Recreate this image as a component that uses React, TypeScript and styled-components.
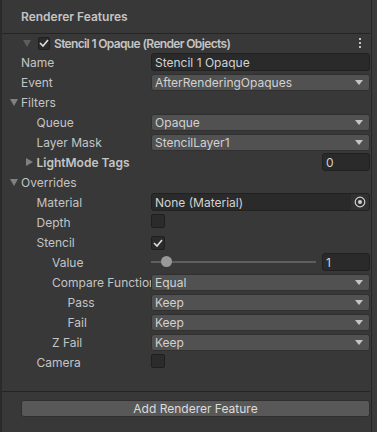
import React from "react";
import styled, { createGlobalStyle } from "styled-components";

const GlobalStyle = createGlobalStyle`
  html, body {
    margin: 0;
    padding: 0;
    background: #383838;
  }
  * {
    box-sizing: border-box;
  }
`;

const Panel = styled.div`
  width: 377px;
  height: 432px;
  display: flex;
  background: #383838;
  border-left: 2px solid #2a2a2a;
  font-family: Inter, "Noto Sans", sans-serif;
  font-size: 12px;
  color: #c4c4c4;
  overflow: hidden;
`;

const Content = styled.div`
  flex: 1;
  display: flex;
  flex-direction: column;
  padding-right: 1px;
`;

const Strip = styled.div`
  width: 6px;
  border-left: 1px solid #262626;
  background: #3a3a3a;
`;

const Title = styled.div`
  height: 33px;
  display: flex;
  align-items: center;
  padding-left: 19px;
  font-weight: 600;
`;

const Separator = styled.div`
  height: 1px;
  background: #242424;
  margin-left: -2px;
`;

const FeatureHeader = styled.div`
  height: 18px;
  display: flex;
  align-items: center;
  padding-left: 21px;
  font-weight: 600;
`;

const HeaderName = styled.span`
  flex: 1;
  margin-left: 4px;
  letter-spacing: -0.65px;
`;

const Row = styled.div`
  height: 20px;
  display: grid;
  grid-template-columns: 149px 1fr;
  align-items: center;
`;

const Label = styled.div<{ $depth: number; $bold?: boolean; $fold?: boolean }>`
  padding-left: ${(p) => 19 + p.$depth * 15.5 - (p.$fold ? 11 : 0)}px;
  white-space: nowrap;
  overflow: hidden;
  display: flex;
  align-items: center;
  font-weight: ${(p) => (p.$bold ? 600 : 400)};
`;

const Fold = styled.span`
  display: inline-flex;
  flex: none;
  width: 11px;
  align-items: center;
`;

const TextField = styled.div`
  height: 18px;
  background: #2a2a2a;
  border: 1px solid #212121;
  border-radius: 3px;
  display: flex;
  align-items: center;
  padding-left: 3px;
  color: #d2d2d2;
  overflow: hidden;
`;

const FieldText = styled.span`
  flex: 1;
  white-space: nowrap;
`;

const Picker = styled.span`
  width: 18px;
  height: 16px;
  display: flex;
  align-items: center;
  justify-content: center;
  background: #313131;
  border-radius: 0 2px 2px 0;
`;

const Dropdown = styled.div`
  height: 17px;
  background: #515151;
  border: 1px solid #303030;
  border-radius: 3px;
  display: flex;
  align-items: center;
  padding: 0 6px 0 3px;
  color: #d2d2d2;
`;

const IntRow = styled.div`
  display: flex;
  justify-content: flex-end;
`;

const IntField = styled(TextField)`
  width: 48px;
`;

const SliderRow = styled.div`
  display: flex;
  align-items: center;
  gap: 6px;
`;

const Track = styled.div`
  flex: 1;
  height: 2px;
  background: #5e5e5e;
  position: relative;
`;

const Thumb = styled.span`
  position: absolute;
  left: 10px;
  top: -5px;
  width: 11px;
  height: 11px;
  border-radius: 50%;
  background: #999999;
`;

const Box = styled.span<{ $small?: boolean }>`
  width: ${(p) => (p.$small ? 12 : 14)}px;
  height: ${(p) => (p.$small ? 13 : 14)}px;
  background: #2b2b2b;
  border: 1px solid #1f1f1f;
  border-radius: 2px;
  display: inline-flex;
  align-items: center;
  justify-content: center;
`;

const Footer = styled.div`
  flex: 1;
  display: flex;
  flex-direction: column;
  justify-content: flex-end;
`;

const ButtonArea = styled.div`
  height: 40px;
  padding: 8px 0 0 19px;
`;

const AddButton = styled.div`
  height: 17px;
  background: #585858;
  border: 1px solid #2f2f2f;
  border-radius: 3px;
  display: flex;
  align-items: center;
  justify-content: center;
  color: #dcdcdc;
`;

const Arrow = () => (
  <svg width="8" height="5" viewBox="0 0 8 5">
    <path d="M0 0 L8 0 L4 5 Z" fill="#c4c4c4" />
  </svg>
);

const FoldDown = ({ color = "#808080" }: { color?: string }) => (
  <svg width="8" height="7" viewBox="0 0 8 7">
    <path d="M0 0 L8 0 L4 7 Z" fill={color} />
  </svg>
);

const FoldRight = () => (
  <svg width="7" height="8" viewBox="0 0 7 8">
    <path d="M0 0 L7 4 L0 8 Z" fill="#808080" />
  </svg>
);

const Check = () => (
  <svg width="10" height="8" viewBox="0 0 10 8">
    <path d="M1 4 L4 7 L9 1" stroke="#e0e0e0" strokeWidth="1.6" fill="none" />
  </svg>
);

const Kebab = () => (
  <svg width="4" height="12" viewBox="0 0 4 12" style={{ marginRight: 8 }}>
    <rect x="1" y="1" width="2" height="2" fill="#c4c4c4" />
    <rect x="1" y="5" width="2" height="2" fill="#c4c4c4" />
    <rect x="1" y="9" width="2" height="2" fill="#c4c4c4" />
  </svg>
);

const Target = () => (
  <svg width="12" height="12" viewBox="0 0 12 12">
    <circle cx="6" cy="6" r="4.8" stroke="#d0d0d0" strokeWidth="1.2" fill="none" />
    <circle cx="6" cy="6" r="2" fill="#d0d0d0" />
  </svg>
);

type Field =
  | { kind: "text"; value: string; picker?: boolean }
  | { kind: "dropdown"; value: string }
  | { kind: "int"; value: string }
  | { kind: "slider"; value: string }
  | { kind: "toggle"; checked: boolean }
  | { kind: "none" };

type RowData = {
  label: string;
  depth: number;
  fold?: "down" | "right";
  bold?: boolean;
  field: Field;
};

const rows: RowData[] = [
  { label: "Name", depth: 0, field: { kind: "text", value: "Stencil 1 Opaque" } },
  { label: "Event", depth: 0, field: { kind: "dropdown", value: "AfterRenderingOpaques" } },
  { label: "Filters", depth: 0, fold: "down", field: { kind: "none" } },
  { label: "Queue", depth: 1, field: { kind: "dropdown", value: "Opaque" } },
  { label: "Layer Mask", depth: 1, field: { kind: "dropdown", value: "StencilLayer1" } },
  { label: "LightMode Tags", depth: 1, fold: "right", bold: true, field: { kind: "int", value: "0" } },
  { label: "Overrides", depth: 0, fold: "down", field: { kind: "none" } },
  { label: "Material", depth: 1, field: { kind: "text", value: "None (Material)", picker: true } },
  { label: "Depth", depth: 1, field: { kind: "toggle", checked: false } },
  { label: "Stencil", depth: 1, field: { kind: "toggle", checked: true } },
  { label: "Value", depth: 2, field: { kind: "slider", value: "1" } },
  { label: "Compare Function", depth: 2, field: { kind: "dropdown", value: "Equal" } },
  { label: "Pass", depth: 3, field: { kind: "dropdown", value: "Keep" } },
  { label: "Fail", depth: 3, field: { kind: "dropdown", value: "Keep" } },
  { label: "Z Fail", depth: 2, field: { kind: "dropdown", value: "Keep" } },
  { label: "Camera", depth: 1, field: { kind: "toggle", checked: false } },
];

const renderField = (field: Field) => {
  switch (field.kind) {
    case "text":
      return (
        <TextField>
          <FieldText>{field.value}</FieldText>
          {field.picker && (
            <Picker>
              <Target />
            </Picker>
          )}
        </TextField>
      );
    case "dropdown":
      return (
        <Dropdown>
          <FieldText>{field.value}</FieldText>
          <Arrow />
        </Dropdown>
      );
    case "int":
      return (
        <IntRow>
          <IntField>{field.value}</IntField>
        </IntRow>
      );
    case "slider":
      return (
        <SliderRow>
          <Track>
            <Thumb />
          </Track>
          <IntField>{field.value}</IntField>
        </SliderRow>
      );
    case "toggle":
      return (
        <div>
          <Box>{field.checked && <Check />}</Box>
        </div>
      );
    default:
      return <div />;
  }
};

export default function App() {
  return (
    <>
      <GlobalStyle />
      <Panel>
        <Content>
          <Title>Renderer Features</Title>
          <Separator />
          <FeatureHeader>
            <FoldDown color="#5e5e5e" />
            <span style={{ width: 7 }} />
            <Box $small>
              <Check />
            </Box>
            <HeaderName>Stencil 1 Opaque (Render Objects)</HeaderName>
            <Kebab />
          </FeatureHeader>
          {rows.map((row) => (
            <Row key={row.label}>
              <Label $depth={row.depth} $bold={row.bold} $fold={!!row.fold}>
                {row.fold && (
                  <Fold>{row.fold === "down" ? <FoldDown /> : <FoldRight />}</Fold>
                )}
                {row.label}
              </Label>
              {renderField(row.field)}
            </Row>
          ))}
          <Footer>
            <Separator />
            <ButtonArea>
              <AddButton>Add Renderer Feature</AddButton>
            </ButtonArea>
          </Footer>
        </Content>
        <Strip />
      </Panel>
    </>
  );
}
